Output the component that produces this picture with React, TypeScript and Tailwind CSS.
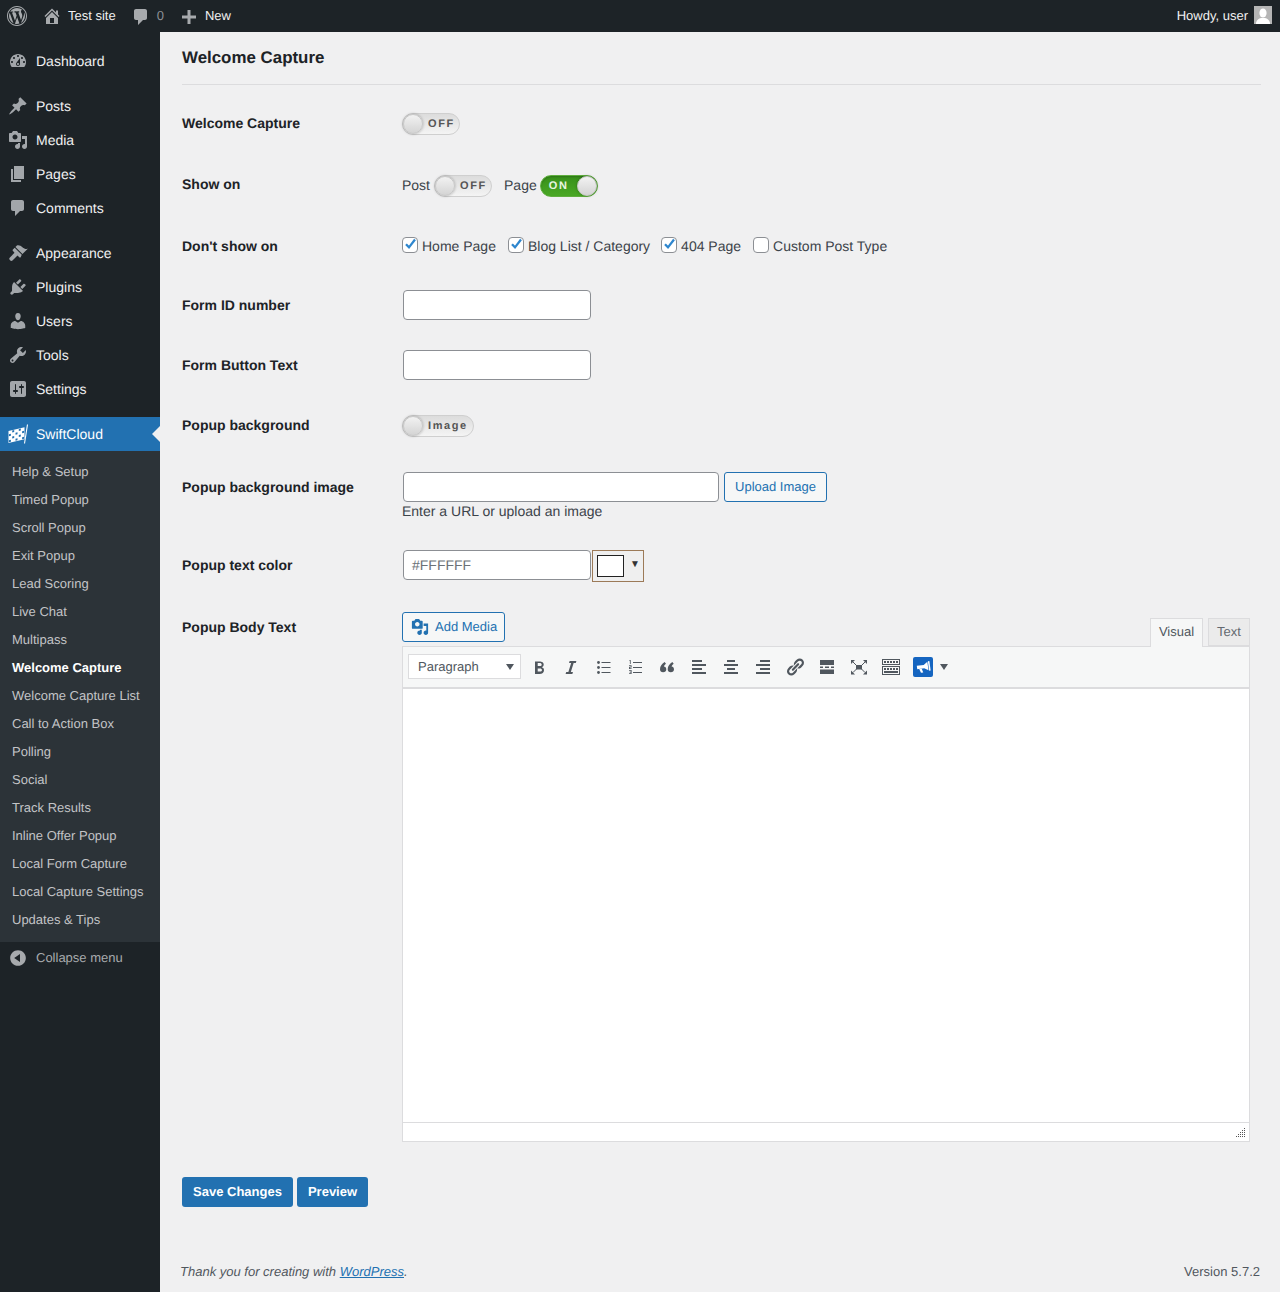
import React from "react";

const P: Record<string, string> = {
  wp: "M20 10c0-5.52-4.48-10-10-10S0 4.48 0 10s4.48 10 10 10 10-4.48 10-10zM10 1.01c4.97 0 8.99 4.02 8.99 8.99s-4.02 8.99-8.99 8.99S1.01 14.97 1.01 10 5.03 1.01 10 1.01zM8.01 14.82L4.96 6.61c.49-.03 1.05-.08 1.05-.08.43-.05.38-1.01-.06-.99 0 0-1.29.1-2.13.1-.15 0-.33 0-.52-.01 1.44-2.17 3.9-3.6 6.7-3.6 2.09 0 3.99.79 5.41 2.09-.6-.08-1.45.35-1.45 1.42 0 .66.38 1.22.79 1.88.31.54.5 1.22.5 2.21 0 1.34-1.27 4.48-1.27 4.48l-2.71-7.5c.48-.03.75-.16.75-.16.43-.05.38-1.1-.05-1.08 0 0-1.3.11-2.14.11-.78 0-2.11-.11-2.11-.11-.43-.02-.48 1.06-.05 1.08l.84.08 1.12 3.04zm6.02 2.15L16.64 10s.67-1.69.39-3.81c.63 1.14.94 2.42.94 3.81 0 2.96-1.56 5.58-3.94 6.97zM2.68 6.77L6.5 17.25c-2.67-1.3-4.47-4.08-4.47-7.25 0-1.16.2-2.23.65-3.23zm7.45 4.53l2.29 6.25c-.75.27-1.57.42-2.42.42-.72 0-1.41-.11-2.06-.3z",
  home: "M16 8.5l1.53 1.53-1.06 1.06L10 4.62l-6.47 6.47-1.06-1.06L10 2.5l4 4v-2h2v4zm-6-2.46l6 5.99V18H4v-5.97zM12 17v-5H8v5h4z",
  comment: "M5 2h9c1.1 0 2 .9 2 2v7c0 1.1-.9 2-2 2h-2l-5 5v-5H5c-1.1 0-2-.9-2-2V4c0-1.1.9-2 2-2z",
  plus: "M17 8.5v3h-5.5V17h-3v-5.5H3v-3h5.5V3h3v5.5z",
  dashboard: "M3.76 16h12.48c1.1-1.37 1.76-3.11 1.76-5 0-4.42-3.58-8-8-8s-8 3.58-8 8c0 1.89.66 3.63 1.76 5zM10 4c.55 0 1 .45 1 1s-.45 1-1 1-1-.45-1-1 .45-1 1-1zM6 6c.55 0 1 .45 1 1s-.45 1-1 1-1-.45-1-1 .45-1 1-1zm8 0c.55 0 1 .45 1 1s-.45 1-1 1-1-.45-1-1 .45-1 1-1zm-5.37 5.55L12 7v6c0 1.1-.9 2-2 2s-2-.9-2-2c0-.57.24-1.08.63-1.45zM4 10c.55 0 1 .45 1 1s-.45 1-1 1-1-.45-1-1 .45-1 1-1zm12 0c.55 0 1 .45 1 1s-.45 1-1 1-1-.45-1-1 .45-1 1-1zm-5 3c0-.55-.45-1-1-1s-1 .45-1 1 .45 1 1 1 1-.45 1-1z",
  pin: "M10.44 3.02l1.82-1.82 6.36 6.35-1.83 1.82c-1.05-.68-2.48-.57-3.41.36l-.75.75c-.92.93-1.04 2.35-.35 3.41l-1.83 1.82-2.41-2.41-2.8 2.79c-.42.42-3.38 2.71-3.8 2.29s1.86-3.39 2.28-3.81l2.79-2.79L4.1 9.36l1.83-1.82c1.05.69 2.48.57 3.4-.36l.75-.75c.93-.92 1.05-2.35.36-3.41z",
  media: "M13 11V4c0-.55-.45-1-1-1h-1.67L9 1H5L3.67 3H2c-.55 0-1 .45-1 1v7c0 .55.45 1 1 1h10c.55 0 1-.45 1-1zM7 4.5c1.38 0 2.5 1.12 2.5 2.5S8.38 9.5 7 9.5 4.5 8.38 4.5 7 5.62 4.5 7 4.5zM14 6h5v10.5c0 1.38-1.12 2.5-2.5 2.5S14 17.88 14 16.5s1.12-2.5 2.5-2.5c.17 0 .34.02.5.05V9h-3V6zm-4 8.05V13h2v3.5c0 1.38-1.12 2.5-2.5 2.5S7 17.88 7 16.5 8.12 14 9.5 14c.17 0 .34.02.5.05z",
  page: "M6 15V2h10v13H6zm-1 1h8v2H3V5h2v11z",
  appearance: "M14.48 11.06L7.41 3.99l1.5-1.5c.5-.56 2.3-.47 3.51.32 1.21.8 1.43 1.28 2.91 2.1 1.18.64 2.45 1.26 4.45.85zm-.71.71L6.7 4.7 4.93 6.47c-.39.39-.39 1.02 0 1.41l1.06 1.06c.39.39.39 1.03 0 1.42l-4.3 4.3c-.6.6-.6 1.6 0 2.2l.6.6c.6.6 1.6.6 2.2 0l4.3-4.3c.39-.39 1.03-.39 1.42 0l1.06 1.06c.39.39 1.02.39 1.41 0z",
  plugins: "M13.11 4.36L9.87 7.6 8 5.73l3.24-3.24c.35-.34 1.05-.2 1.56.32.52.51.66 1.21.31 1.55zm-8 1.77l.91-1.12 9.01 9.01-1.19.84c-.71.71-2.63 1.16-3.82 1.16H6.14L4.9 17.26c-.59.59-1.54.59-2.12 0-.59-.58-.59-1.53 0-2.12l1.24-1.24v-3.88c0-1.13.4-3.19 1.09-3.89zm7.26 3.97l3.24-3.24c.34-.35 1.04-.21 1.55.31.52.51.66 1.21.31 1.55l-3.24 3.25z",
  users: "M10 9.25c-2.27 0-2.73-3.44-2.73-3.44C7 4.02 7.82 2 9.97 2c2.16 0 2.98 2.02 2.71 3.81 0 0-.41 3.44-2.68 3.44zm0 2.57L12.72 10c2.39 0 4.52 2.33 4.52 4.53v2.49s-3.65 1.13-7.24 1.13c-3.65 0-7.24-1.13-7.24-1.13v-2.49c0-2.25 1.94-4.48 4.47-4.48z",
  tools: "M16.68 9.77c-1.34 1.34-3.3 1.67-4.95.99l-5.41 6.52c-.99.99-2.59.99-3.58 0s-.99-2.59 0-3.57l6.52-5.42c-.68-1.65-.35-3.61.99-4.95 1.28-1.28 3.12-1.62 4.72-1.06l-2.89 2.89 2.82 2.82 2.86-2.87c.53 1.58.18 3.39-1.08 4.67zM3.81 16.21c.4.39 1.04.39 1.43 0 .4-.4.4-1.04 0-1.43-.39-.4-1.03-.4-1.43 0-.39.39-.39 1.03 0 1.43z",
  settings: "M18 16V4c0-1.1-.9-2-2-2H4c-1.1 0-2 .9-2 2v12c0 1.1.9 2 2 2h12c1.1 0 2-.9 2-2zM8 11h1c.55 0 1 .45 1 1s-.45 1-1 1H8v1.5c0 .28-.22.5-.5.5s-.5-.22-.5-.5V13H6c-.55 0-1-.45-1-1s.45-1 1-1h1V5.5c0-.28.22-.5.5-.5s.5.22.5.5V11zm5-2h-1c-.55 0-1-.45-1-1s.45-1 1-1h1V5.5c0-.28.22-.5.5-.5s.5.22.5.5V7h1c.55 0 1 .45 1 1s-.45 1-1 1h-1v5.5c0 .28-.22.5-.5.5s-.5-.22-.5-.5V9z",
  collapse: "M10 2.16c4.33 0 7.84 3.51 7.84 7.84s-3.51 7.84-7.84 7.84S2.16 14.33 2.16 10 5.71 2.16 10 2.16zm2 11.72V6.12L6.18 9.97z",
  bold: "M6 4v13h4.54c1.37 0 2.46-.33 3.26-1 .8-.66 1.2-1.58 1.2-2.77 0-.84-.17-1.51-.51-2.01s-.9-.85-1.67-1.03v-.06c.57-.1 1.02-.39 1.36-.87.34-.47.51-1.08.51-1.81 0-1.02-.36-1.75-1.08-2.2-.73-.44-1.9-.67-3.53-.67H6zm2.71 5.14v-3.03h1.71c.79 0 1.37.11 1.74.33.37.23.55.59.55 1.1 0 .58-.17.98-.51 1.2-.34.23-.88.34-1.62.34H8.71zm0 5.8v-3.4h1.94c.84 0 1.43.12 1.78.36.35.24.52.62.52 1.15 0 .55-.17.95-.52 1.2-.35.24-.93.36-1.78.36H8.71z",
  italic: "M14.78 6h-2.13l-2.8 9h2.12l-.62 2H4.6l.62-2h2.14l2.8-9H8.03l.62-2h6.75z",
  quote: "M3 12.2C3 9.2 4.8 7 7.6 5L9 6.7C7.7 7.8 7 8.7 6.9 9.4 8.3 9.5 9.3 10.6 9.3 12.2 9.3 14 8 15.2 6.1 15.2 4.2 15.2 3 14 3 12.2ZM10.7 12.2C10.7 9.2 12.5 7 15.3 5L16.7 6.7C15.4 7.8 14.7 8.7 14.6 9.4 16 9.5 17 10.6 17 12.2 17 14 15.7 15.2 13.8 15.2 11.9 15.2 10.7 14 10.7 12.2Z",
  link: "M17.74 2.76c1.68 1.69 1.68 4.41 0 6.1l-1.53 1.52c-1.12 1.12-2.7 1.47-4.14 1.09l2.62-2.61.76-.77.76-.76c.84-.84.84-2.2 0-3.04-.84-.85-2.2-.85-3.04 0l-.77.76-3.38 3.38c-.37-1.44-.02-3.02 1.1-4.14l1.52-1.53c1.69-1.68 4.42-1.68 6.1 0zM8.59 13.43l5.34-5.34c.42-.42.42-1.1 0-1.52-.44-.43-1.13-.39-1.53 0l-5.33 5.34c-.42.42-.42 1.1 0 1.52.44.43 1.13.39 1.52 0zm-.76 2.29l4.14-4.15c.38 1.44.03 3.02-1.09 4.14l-1.52 1.53c-1.69 1.68-4.41 1.68-6.1 0-1.68-1.68-1.68-4.42 0-6.1l1.53-1.52c1.12-1.12 2.7-1.47 4.14-1.1l-4.14 4.15c-.85.84-.85 2.2 0 3.05.84.84 2.2.84 3.04 0z",
  left: "M3 3h10v2H3zM3 7h14v2H3zM3 11h10v2H3zM3 15h14v2H3z",
  center: "M6 3h8v2H6zM3 7h14v2H3zM6 11h8v2H6zM3 15h14v2H3z",
  right: "M7 3h10v2H7zM3 7h14v2H3zM7 11h10v2H7zM3 15h14v2H3z",
  more: "M3 3h14v5H3zM3 9.5h3v1.5H3zM8 9.5h4v1.5H8zM14 9.5h3v1.5h-3zM3 12.5h14V17H3z",
};

function I({ n, c = "", s = 20 }: { n: string; c?: string; s?: number }) {
  return (
    <svg viewBox="0 0 20 20" width={s} height={s} className={c} fill="currentColor">
      <path d={P[n]} fillRule="evenodd" />
    </svg>
  );
}

function Flag() {
  const cells: React.ReactElement[] = [];
  for (let r = 0; r < 4; r++)
    for (let q = 0; q < 5; q++)
      if ((r + q) % 2 === 1)
        cells.push(<rect key={`${r}-${q}`} x={q * 3.3 + 0.4} y={r * 3 + 0.4} width={2} height={2} fill="#2271b1" />);
  return (
    <svg viewBox="0 0 20 20" width="20" height="20" className="shrink-0">
      <g transform="translate(0.5 7) skewY(-13)">
        <rect x="0" y="0" width="16" height="12" fill="#fff" />
        {cells}
      </g>
      <path d="M19.5 0.5 L16.5 19.5" stroke="#fff" strokeWidth="1.1" fill="none" />
    </svg>
  );
}

function Toggle({ on, label, w }: { on?: boolean; label: string; w: string }) {
  return (
    <span
      className={`${w} h-[22px] rounded-[11px] border flex items-center shrink-0 ${
        on
          ? "border-[#5fae3e] bg-gradient-to-b from-[#37901a] to-[#4aa825] justify-between pl-[8px] pr-0 shadow-[inset_0_1px_2px_rgba(0,0,0,.2)]"
          : "border-[#cfcfcf] bg-gradient-to-b from-[#dcdcdc] to-[#f4f4f4]"
      }`}
    >
      {on && <span className="text-[11px] font-bold tracking-[1.8px] text-[#e8f5e0] leading-none">{label}</span>}
      <span className="w-[20px] h-[20px] rounded-full border border-[#c8c8c8] bg-gradient-to-b from-[#f2f2f2] to-[#d4d4d4] shadow-[0_0_3px_rgba(0,0,0,.3)] shrink-0" />
      {!on && <span className="ml-[5px] text-[11px] font-bold tracking-[1.6px] text-[#555] leading-none">{label}</span>}
    </span>
  );
}

function Check({ on, label, c = "" }: { on?: boolean; label: string; c?: string }) {
  return (
    <span className={`flex items-start gap-[4px] ${c}`}>
      <span className="w-4 h-4 mt-px rounded-[4px] border border-[#8c8f94] bg-white flex items-center justify-center shrink-0">
        {on && (
          <svg viewBox="0 0 16 16" width="16" height="16" className="-mt-[2px] -mr-[1px]">
            <path d="M3.2 8.2 L6.4 11.6 L12.8 3.2" fill="none" stroke="#2e86ce" strokeWidth="2.4" />
          </svg>
        )}
      </span>
      <span className="text-[14px] leading-[20px] text-[#3c434a]">{label}</span>
    </span>
  );
}

function Row({ h, label, pt = "", children }: { h: string; label: string; pt?: string; children: React.ReactNode }) {
  return (
    <div className={`flex items-start ${h}`}>
      <div className={`w-[220px] shrink-0 text-[14px] font-bold leading-[20px] text-[#1d2327] ${pt}`}>{label}</div>
      <div className="flex-1 min-w-0">{children}</div>
    </div>
  );
}

function Box({ children }: { children: React.ReactNode }) {
  return (
    <span className="w-[30px] h-[30px] mx-[1px] flex items-center justify-center text-[#50575e] shrink-0">
      {children}
    </span>
  );
}

function Tool({ n }: { n: string }) {
  return (
    <Box>
      <I n={n} />
    </Box>
  );
}

const input = "block h-[30px] bg-white border border-[#8c8f94] rounded-[4px] ml-px";

const top1 = [["dashboard", "Dashboard"]];
const top2 = [
  ["pin", "Posts"],
  ["media", "Media"],
  ["page", "Pages"],
  ["comment", "Comments"],
];
const top3 = [
  ["appearance", "Appearance"],
  ["plugins", "Plugins"],
  ["users", "Users"],
  ["tools", "Tools"],
  ["settings", "Settings"],
];
const subs = [
  "Help & Setup",
  "Timed Popup",
  "Scroll Popup",
  "Exit Popup",
  "Lead Scoring",
  "Live Chat",
  "Multipass",
  "Welcome Capture",
  "Welcome Capture List",
  "Call to Action Box",
  "Polling",
  "Social",
  "Track Results",
  "Inline Offer Popup",
  "Local Form Capture",
  "Local Capture Settings",
  "Updates & Tips",
];

function MenuGroup({ items, c }: { items: string[][]; c: string }) {
  return (
    <div className={c}>
      {items.map(([ic, t]) => (
        <div key={t} className="h-[34px] flex items-center pl-2 gap-2 text-[14px] text-[#f0f0f1]">
          <I n={ic} c="text-[#a2a6aa]" />
          <span>{t}</span>
        </div>
      ))}
    </div>
  );
}

export default function App() {
  return (
    <div className="w-[1280px] h-[1292px] flex flex-col bg-[#f0f0f1] overflow-hidden [text-rendering:geometricPrecision] font-['Liberation_Sans',Arial,sans-serif]">
      <header className="h-8 shrink-0 bg-[#1d2327] flex items-center text-[13px] text-[#f0f0f1]">
        <I n="wp" c="ml-[7px] text-[#a7aaad]" />
        <I n="home" c="ml-[15px] text-[#a7aaad]" />
        <span className="ml-[6px]">Test site</span>
        <I n="comment" c="ml-[15px] text-[#a7aaad] mt-[2px]" />
        <span className="ml-[6px] text-[#8c8f94]">0</span>
        <I n="plus" c="ml-[15px] text-[#a7aaad] mt-[1px]" />
        <span className="ml-[6px]">New</span>
        <span className="ml-auto">Howdy, user</span>
        <span className="ml-[6px] mr-2 w-[18px] h-[18px] bg-[#b5b5b5] overflow-hidden -mt-[2px] shrink-0">
          <svg viewBox="0 0 18 18" width="18" height="18" fill="#fff">
            <ellipse cx="9" cy="7" rx="3.6" ry="4.6" />
            <path d="M2 18c0-4 3-5.5 5-6h4c2 .5 5 2 5 6z" />
          </svg>
        </span>
      </header>
      <div className="flex-1 flex min-h-0">
        <aside className="w-40 shrink-0 bg-[#1d2327]">
          <MenuGroup items={top1} c="mt-3" />
          <MenuGroup items={top2} c="mt-[11px]" />
          <MenuGroup items={top3} c="mt-[11px]" />
          <div className="relative mt-[11px] h-[34px] bg-[#2271b1] flex items-center pl-2 gap-2 text-[14px] text-white">
            <Flag />
            <span>SwiftCloud</span>
            <span className="absolute right-0 top-[9px] border-y-[8px] border-r-[8px] border-y-transparent border-r-[#f0f0f1]" />
          </div>
          <ul className="bg-[#2c3338] pt-[7px] pb-[8px]">
            {subs.map((s) => (
              <li
                key={s}
                className={`h-7 flex items-center pl-3 text-[13px] ${
                  s === "Welcome Capture" ? "font-bold text-white" : "text-[#c3c4c7]"
                }`}
              >
                {s}
              </li>
            ))}
          </ul>
          <div className="h-[30px] flex items-center pl-2 gap-2 text-[13px] text-[#a7aaad]">
            <I n="collapse" c="text-[#a7aaad] mt-[1px]" />
            <span className="mt-px">Collapse menu</span>
          </div>
        </aside>
        <main className="flex-1 min-w-0 flex flex-col pl-[22px] pr-[19px]">
          <h2 className="text-[16.9px] font-bold leading-[24px] text-[#1d2327] mt-[14px]">Welcome Capture</h2>
          <div className="h-px bg-[#dcdcde] mt-[14px] mb-[28px]" />
          <Row h="h-[61px]" label="Welcome Capture">
            <Toggle label="OFF" w="w-[58px]" />
          </Row>
          <Row h="h-[62px]" label="Show on">
            <div className="flex items-center h-[22px] mt-px text-[14px] text-[#3c434a]">
              <span className="mr-[4px] pb-px">Post</span>
              <Toggle label="OFF" w="w-[58px]" />
              <span className="ml-3 mr-[3px] pb-px">Page</span>
              <Toggle on label="ON" w="w-[58px]" />
            </div>
          </Row>
          <Row h="h-[54px]" label="Don't show on">
            <div className="flex items-start">
              <Check on label="Home Page" />
              <Check on label="Blog List / Category" c="ml-3" />
              <Check on label="404 Page" c="ml-[11px]" />
              <Check label="Custom Post Type" c="ml-3" />
            </div>
          </Row>
          <Row h="h-[60px]" label="Form ID number" pt="pt-[5px]">
            <div className={`${input} w-[188px]`} />
          </Row>
          <Row h="h-[65px]" label="Form Button Text" pt="pt-[5px]">
            <div className={`${input} w-[188px]`} />
          </Row>
          <Row h="h-[57px]" label="Popup background">
            <Toggle label="Image" w="w-[72px]" />
          </Row>
          <Row h="h-[78px]" label="Popup background image" pt="pt-[5px]">
            <div className="flex items-center">
              <div className={`${input} w-[316px]`} />
              <span className="ml-[5px] w-[103px] h-[30px] rounded-[3px] border border-[#2271b1] bg-[#f6f7f7] text-[#2271b1] text-[13px] flex items-center justify-center">
                Upload Image
              </span>
            </div>
            <p className="text-[14px] leading-[18px] text-[#3c434a]">Enter a URL or upload an image</p>
          </Row>
          <Row h="h-[62px]" label="Popup text color" pt="pt-[5px]">
            <div className="flex items-start">
              <div className={`${input} w-[188px] flex items-center pl-2 text-[14px] text-[#6b7176]`}>#FFFFFF</div>
              <div className="ml-px w-[52px] h-[32px] border border-[#9c7a58] bg-[#efefef] flex items-center pl-1">
                <span className="w-[27px] h-[22px] bg-white border border-[#222]" />
                <span className="ml-[6px] text-[10px] leading-none text-[#333] -mt-[3px]">▼</span>
              </div>
            </div>
          </Row>
          <Row h="" label="Popup Body Text" pt="pt-[5px]">
            <div className="w-[848px]">
              <div className="flex items-end h-[35px] -mb-px relative z-10">
                <span className="self-start w-[103px] h-[30px] rounded-[3px] border border-[#2271b1] bg-[#f6f7f7] text-[#2271b1] text-[13px] flex items-center pl-2 gap-[6px]">
                  <I n="media" s={18} />
                  Add Media
                </span>
                <span className="ml-auto w-[53px] h-[29px] pb-[2px] border border-b-0 border-[#dcdcde] bg-[#f6f7f7] text-[13px] text-[#50575e] flex items-center justify-center">
                  Visual
                </span>
                <span className="ml-[5px] mb-px w-[42px] h-[28px] border border-[#dcdcde] bg-[#ebebeb] text-[13px] text-[#646970] flex items-center justify-center">
                  Text
                </span>
              </div>
              <div className="h-[43px] border border-[#dcdcde] border-b-2 bg-[#f6f7f7] flex items-center pl-[5px]">
                <span className="w-[113px] h-[25px] -mt-px border border-[#dcdcde] bg-white text-[13px] text-[#50575e] flex items-center pl-[9px] relative mr-[2px] shrink-0">
                  Paragraph
                  <span className="ml-auto mr-[6px] border-x-[4.5px] border-t-[6px] border-x-transparent border-t-[#50575e]" />
                </span>
                <Tool n="bold" />
                <Tool n="italic" />
                <Box>
                  <svg viewBox="0 0 20 20" width="20" height="20" fill="currentColor">
                    <circle cx="5.5" cy="5.5" r="1.4" />
                    <circle cx="5.5" cy="10.5" r="1.4" />
                    <circle cx="5.5" cy="15.5" r="1.4" />
                    <path d="M8.5 5h9v1h-9zM8.5 10h9v1h-9zM8.5 15h9v1h-9z" />
                  </svg>
                </Box>
                <Box>
                  <svg viewBox="0 0 20 20" width="20" height="20" fill="currentColor">
                    <path d="M8 5h9v1H8zM8 10h9v1H8zM8 15h9v1H8z" />
                    <path d="M4.6 3h1.1v4H4.9V4H4.4z" />
                    <path d="M4 8.2h2.6v2.2H4.9v.8h1.7v.8H4V9.8h1.7V9H4z" />
                    <path d="M4 13h2.6v4H4v-.8h1.7v-.8H4.6v-.7h1.1v-.9H4z" />
                  </svg>
                </Box>
                <Tool n="quote" />
                <Tool n="left" />
                <Tool n="center" />
                <Tool n="right" />
                <Tool n="link" />
                <Tool n="more" />
                <Box>
                  <svg viewBox="0 0 20 20" width="20" height="20" fill="currentColor">
                    <rect x="7" y="8" width="6" height="4.5" />
                    <path d="M2 3h4L2 7zM18 3h-4l4 4zM2 17.5h4l-4-4zM18 17.5h-4l4-4z" />
                    <path d="M4 5l3.5 3.5M16 5l-3.5 3.5M4 15.5L7.5 12M16 15.5L12.5 12" stroke="currentColor" strokeWidth="1" />
                  </svg>
                </Box>
                <Box>
                  <svg viewBox="0 0 20 20" width="20" height="20" fill="none" stroke="currentColor">
                    <rect x="1.5" y="2.5" width="17" height="5" />
                    <rect x="1.5" y="9.5" width="17" height="8" />
                    <path d="M3 5h14M3 12h14" strokeWidth="2" strokeDasharray="2 1" />
                    <path d="M3 15h14" strokeWidth="2" />
                  </svg>
                </Box>
                <span className="w-[30px] h-[30px] mx-[1px] flex items-center justify-center shrink-0">
                  <span className="w-5 h-5 rounded-[2px] bg-[#1565c0] flex items-center justify-center">
                    <svg viewBox="0 0 20 20" width="20" height="20" fill="#fff">
                      <g transform="rotate(-8 10 10)">
                        <path d="M4 8h7l4-2.5v8.5l-4-2.5H4z" />
                        <path d="M15.6 5h1.5v9.5h-1.5z" />
                        <path d="M6 11.5h2.5l1 4H7.2z" />
                      </g>
                    </svg>
                  </span>
                </span>
                <span className="ml-[1px] border-x-[4.5px] border-t-[6px] border-x-transparent border-t-[#50575e]" />
              </div>
              <div className="h-[433px] bg-white border-x border-[#dcdcde]" />
              <div className="h-[20px] bg-white border border-[#dcdcde] flex items-end justify-end pr-[3px] pb-[3px]">
                <svg width="10" height="10" viewBox="0 0 10 10" fill="#555">
                  {[
                    [8, 0],
                    [8, 2],
                    [6, 2],
                    [8, 4],
                    [6, 4],
                    [4, 4],
                    [8, 6],
                    [6, 6],
                    [4, 6],
                    [2, 6],
                    [8, 8],
                    [6, 8],
                    [4, 8],
                    [2, 8],
                    [0, 8],
                  ].map(([x, y]) => (
                    <rect key={`${x}${y}`} x={x} y={y} width="1" height="1" />
                  ))}
                </svg>
              </div>
            </div>
          </Row>
          <div className="flex gap-1 mt-[35px]">
            <span className="w-[111px] h-[30px] rounded-[3px] bg-[#2271b1] text-white text-[13px] font-bold flex items-center justify-center">
              Save Changes
            </span>
            <span className="w-[71px] h-[30px] rounded-[3px] bg-[#2271b1] text-white text-[13px] font-bold flex items-center justify-center">
              Preview
            </span>
          </div>
          <footer className="mt-auto mb-[10px] -ml-[2px] flex justify-between items-center text-[13px] leading-5 text-[#50575e]">
            <span className="italic">
              Thank you for creating with <span className="underline text-[#2271b1]">WordPress</span>.
            </span>
            <span className="mr-px">Version 5.7.2</span>
          </footer>
        </main>
      </div>
    </div>
  );
}
